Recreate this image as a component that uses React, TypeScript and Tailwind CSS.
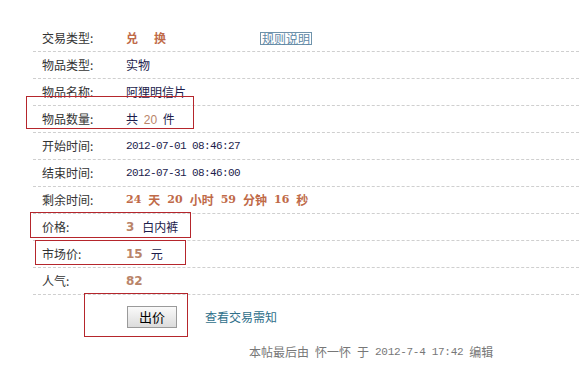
const cjk = "font-['SimSun','Noto_Sans_CJK_SC',sans-serif]";

type Row = { label: string; value: React.ReactNode };

const num = "font-['Verdana','DejaVu_Sans',sans-serif] font-bold text-[12px] text-[#b98469]";
const mono = "font-['Liberation_Mono',monospace] text-[11px] tracking-[-0.6px] text-[#1c1c4c]";
const timer = "font-bold text-[#c06a48]";
const tnum = "font-['DejaVu_Serif',serif] text-[11px]";

const rows: Row[] = [
  {
    label: "交易类型",
    value: (
      <div className="flex items-center">
        <span className={`${timer} w-[28px]`}>兑</span>
        <span className={`${timer} w-[106px]`}>换</span>
        <span className="border border-[#6f93ab] text-[#5d87a6] leading-[11px] px-px text-[12px]">规则说明</span>
      </div>
    ),
  },
  { label: "物品类型", value: <span className="text-[#1c1c4c]">实物</span> },
  { label: "物品名称", value: <span className="text-[#1c1c4c]">阿狸明信片</span> },
  {
    label: "物品数量",
    value: (
      <span className="text-[#1c1c4c]">
        共 <span className="font-['Liberation_Sans',sans-serif] text-[#b98469] px-[3px]">20</span> 件
      </span>
    ),
  },
  { label: "开始时间", value: <span className={mono}>2012-07-01 08:46:27</span> },
  { label: "结束时间", value: <span className={mono}>2012-07-31 08:46:00</span> },
  {
    label: "剩余时间",
    value: (
      <span className={`${timer} flex gap-[7px] items-center`}>
        <span className={tnum}>24</span>
        <span>天</span>
        <span className={tnum}>20</span>
        <span>小时</span>
        <span className={tnum}>59</span>
        <span>分钟</span>
        <span className={tnum}>16</span>
        <span>秒</span>
      </span>
    ),
  },
  {
    label: "价格",
    value: (
      <span className="flex items-center gap-[8px]">
        <span className={num}>3</span>
        <span className="text-[#1c1c4c]">白内裤</span>
      </span>
    ),
  },
  {
    label: "市场价",
    value: (
      <span className="flex items-center gap-[8px]">
        <span className={num}>15</span>
        <span className="text-[#1c1c4c]">元</span>
      </span>
    ),
  },
  { label: "人气", value: <span className={num}>82</span> },
];

export default function App() {
  return (
    <div className={`relative w-[579px] h-[365px] bg-white overflow-hidden text-[12px] text-[#333] ${cjk}`}>
      <div className="pt-[25px] pl-[33px]">
        {rows.map((r) => (
          <div
            key={r.label}
            className="flex items-center h-[27px] border-b border-dashed border-[#cfcfcf]"
          >
            <span className="w-[93px] pl-[9px]">{r.label}:</span>
            {r.value}
          </div>
        ))}

        <div className="flex items-center h-[44px]">
          <button className="ml-[94px] w-[50px] h-[22px] border border-[#9a9a9a] bg-gradient-to-b from-[#fafafa] to-[#dcdcdc] text-[13px] font-normal text-black">
            出价
          </button>
          <a href="#" className="ml-[28px] text-[#2f6f8a]">查看交易需知</a>
        </div>

        <div className="pl-[216px] pt-[6px] leading-[14px] text-[#777] flex gap-[6px]">
          <span>本帖最后由</span>
          <span>怀一怀</span>
          <span>于</span>
          <span className="font-['Liberation_Mono',monospace] text-[11px] tracking-[-0.3px]">2012-7-4 17:42</span>
          <span>编辑</span>
        </div>
      </div>

      {/* annotation boxes */}
      <div className="absolute left-[26px] top-[96px] w-[168px] h-[33px] border border-[#b5262c]" />
      <div className="absolute left-[30px] top-[212px] w-[161px] h-[26px] border border-[#b5262c]" />
      <div className="absolute left-[35px] top-[240px] w-[151px] h-[25px] border border-[#b5262c]" />
      <div className="absolute left-[84px] top-[293px] w-[104px] h-[44px] border border-[#b5262c]" />
    </div>
  );
}
